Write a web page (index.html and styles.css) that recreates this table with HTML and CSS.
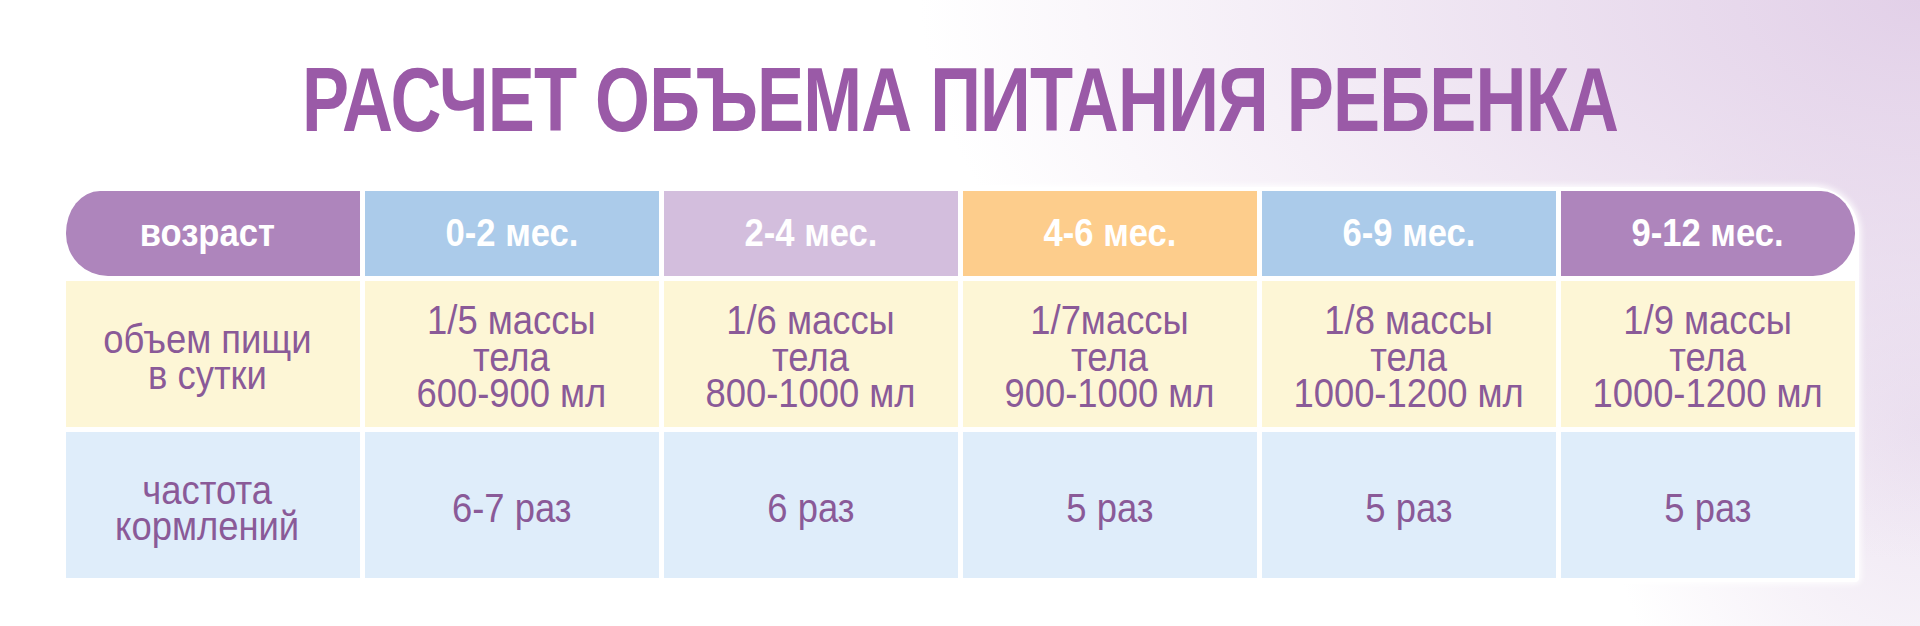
FILE: index.html
```html
<!DOCTYPE html>
<html lang="ru">
<head>
<meta charset="utf-8">
<title>Расчет объема питания ребенка</title>
<link rel="stylesheet" href="styles.css">
</head>
<body>
<main class="page">
  <h1 class="title"><span class="title-text">РАСЧЕТ ОБЪЕМА ПИТАНИЯ РЕБЕНКА</span></h1>
  <div class="frame">
    <div class="table">
      <div class="cell head head-purple head-left"><span class="txt shift-left">возраст</span></div>
      <div class="cell head head-blue"><span class="txt">0-2 мес.</span></div>
      <div class="cell head head-lilac"><span class="txt">2-4 мес.</span></div>
      <div class="cell head head-peach"><span class="txt">4-6 мес.</span></div>
      <div class="cell head head-blue"><span class="txt">6-9 мес.</span></div>
      <div class="cell head head-purple head-right"><span class="txt">9-12 мес.</span></div>

      <div class="cell body yellow"><span class="txt shift-left">объем пищи<br>в сутки</span></div>
      <div class="cell body yellow"><span class="txt">1/5 массы<br>тела<br>600-900 мл</span></div>
      <div class="cell body yellow"><span class="txt">1/6 массы<br>тела<br>800-1000 мл</span></div>
      <div class="cell body yellow"><span class="txt">1/7массы<br>тела<br>900-1000 мл</span></div>
      <div class="cell body yellow"><span class="txt">1/8 массы<br>тела<br>1000-1200 мл</span></div>
      <div class="cell body yellow"><span class="txt">1/9 массы<br>тела<br>1000-1200 мл</span></div>

      <div class="cell body blue"><span class="txt shift-left">частота<br>кормлений</span></div>
      <div class="cell body blue"><span class="txt">6-7 раз</span></div>
      <div class="cell body blue"><span class="txt">6 раз</span></div>
      <div class="cell body blue"><span class="txt">5 раз</span></div>
      <div class="cell body blue"><span class="txt">5 раз</span></div>
      <div class="cell body blue"><span class="txt">5 раз</span></div>
    </div>
  </div>
</main>
</body>
</html>
```

FILE: styles.css
```css
html, body {
  margin: 0;
  padding: 0;
}
body {
  width: 1920px;
  height: 626px;
  overflow: hidden;
  background:
    radial-gradient(ellipse 1000px 560px at 1920px 0px, #e2d0e8 0%, rgba(227,210,233,0.6) 45%, rgba(255,255,255,0) 100%),
    radial-gradient(ellipse 320px 420px at 1920px 430px, rgba(234,223,239,0.85) 0%, rgba(255,255,255,0) 100%),
    #ffffff;
  font-family: "Liberation Sans", Arial, sans-serif;
}
.page {
  display: flex;
  flex-direction: column;
  align-items: center;
  padding-top: 50px;
}
.title {
  margin: 0;
  font-family: "Liberation Sans", Arial, sans-serif;
  font-weight: 700;
  font-size: 91px;
  line-height: 100px;
  color: #9a5aa7;
  white-space: nowrap;
  text-align: center;
}
.title-text {
  display: inline-block;
  letter-spacing: -1px;
  transform: scaleX(0.775);
  transform-origin: center;
}
.frame {
  margin-top: 37px;
  padding: 4px;
  background: #ffffff;
  border-radius: 46px 46px 4px 4px;
  box-shadow: 0 0 6px 2px rgba(255,255,255,0.9);
}
.table {
  display: grid;
  grid-template-columns: repeat(6, 294px);
  grid-template-rows: 85px 146px 146px;
  gap: 5px;
}
.cell {
  display: flex;
  align-items: center;
  justify-content: center;
  text-align: center;
}
.txt {
  display: inline-block;
  white-space: nowrap;
}
.head {
  color: #ffffff;
  font-weight: 700;
  font-size: 38px;
}
.head .txt {
  transform: scaleX(0.91);
}
.head-purple { background: #ae85bc; }
.head-blue { background: #abcbea; }
.head-lilac { background: #d3bedd; }
.head-peach { background: #fdcd8c; }
.head-left { border-radius: 34px 0 0 42px / 42px 0 0 42px; }
.head-right { border-radius: 0 34px 42px 0 / 0 42px 42px 0; }
.body {
  color: #8a5a98;
  font-size: 40px;
  line-height: 36.5px;
  padding-top: 6px;
}
.body .txt {
  transform: scaleX(0.91);
}
.head .txt.shift-left,
.body .txt.shift-left {
  margin-right: 10px;
}
.yellow { background: #fdf6d6; }
.blue { background: #dfedfa; }
```
